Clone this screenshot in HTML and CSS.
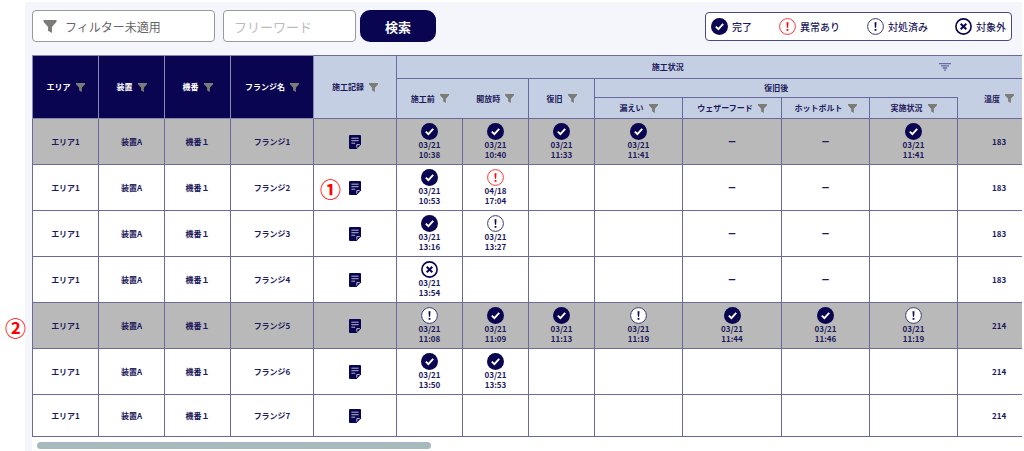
FILE: index.html
```html
<!DOCTYPE html>
<html lang="ja">
<head>
    <meta charset="UTF-8">
    <meta name="viewport" content="width=device-width, initial-scale=1.0">
    <title>施工状況一覧</title>
    <link rel="stylesheet" href="styles.css">
</head>
<body>
    <svg class="sprite" aria-hidden="true">
        <symbol id="funnel" viewBox="0 0 12 12">
            <path d="M0 0H12V1.6L7.8 6.4V12L4.2 10V6.4L0 1.6Z" fill="#7c7c76"/>
        </symbol>
        <symbol id="lines" viewBox="0 0 12 8">
            <path d="M0 .6H12M2 2.8H10M3.8 5H8.2M5 7.2H7" stroke="#6a6aa4" stroke-width="1.3"/>
        </symbol>
        <symbol id="done" viewBox="0 0 17 17">
            <circle cx="8.5" cy="8.5" r="8.5" fill="#0a0550"/>
            <path d="M4.8 8.6L7.4 11.1L12.2 5.9" fill="none" stroke="#fff" stroke-width="1.9"/>
        </symbol>
        <symbol id="error" viewBox="0 0 17 17">
            <circle cx="8.5" cy="8.5" r="7.9" fill="#fff" stroke="#f33" stroke-width="1"/>
            <path d="M7.5 4.2H9.5L9.1 9.8H7.9ZM7.6 10.9H9.4V12.7H7.6Z" fill="#f00"/>
        </symbol>
        <symbol id="handled" viewBox="0 0 17 17">
            <circle cx="8.5" cy="8.5" r="7.9" fill="#fff" stroke="#3b3873" stroke-width="1"/>
            <path d="M7.5 4.2H9.5L9.1 9.8H7.9ZM7.6 10.9H9.4V12.7H7.6Z" fill="#0a0550"/>
        </symbol>
        <symbol id="excluded" viewBox="0 0 17 17">
            <circle cx="8.5" cy="8.5" r="7.6" fill="#fff" stroke="#0a0550" stroke-width="1.6"/>
            <path d="M5.7 5.7L11.3 11.3M11.3 5.7L5.7 11.3" stroke="#0a0550" stroke-width="2"/>
        </symbol>
        <symbol id="note" viewBox="0 0 12 14">
            <path d="M1 0H11Q12 0 12 1V9.4L7.6 14H1Q0 14 0 13V1Q0 0 1 0Z" fill="#0a0550"/>
            <path d="M2.4 3.2H9.6M2.4 5.7H9.6M2.4 8.2H6.2" stroke="#b5b4d0" stroke-width="1"/>
            <path d="M7.8 12.6V9.6H10.8" fill="none" stroke="#d5d4e4" stroke-width=".9"/>
        </symbol>
    </svg>

    <main class="panel">
        <div class="toolbar">
            <button type="button" class="filter-box">
                <svg class="funnel-lg"><use href="#funnel"/></svg>
                フィルター未適用
            </button>
            <input type="text" class="free-word" placeholder="フリーワード" aria-label="フリーワード">
            <button type="button" class="search">検索</button>
            <ul class="legend">
                <li><svg class="status"><use href="#done"/></svg>完了</li>
                <li><svg class="status"><use href="#error"/></svg>異常あり</li>
                <li><svg class="status"><use href="#handled"/></svg>対処済み</li>
                <li><svg class="status"><use href="#excluded"/></svg>対象外</li>
            </ul>
        </div>

        <div class="table-area">
            <div class="table-wrap">
                <table>
                    <colgroup>
                        <col class="w-s"><col class="w-s"><col class="w-s"><col class="w-m"><col class="w-m">
                        <col class="w-s"><col class="w-s"><col class="w-s">
                        <col class="w-l"><col class="w-xl"><col class="w-l"><col class="w-l"><col class="w-m">
                    </colgroup>
                    <thead>
                        <tr class="head-top">
                            <th rowspan="3" class="key"><div class="head">エリア<button type="button" aria-label="エリアで絞り込み"><svg><use href="#funnel"/></svg></button></div></th>
                            <th rowspan="3" class="key"><div class="head">装置<button type="button" aria-label="装置で絞り込み"><svg><use href="#funnel"/></svg></button></div></th>
                            <th rowspan="3" class="key"><div class="head">機番<button type="button" aria-label="機番で絞り込み"><svg><use href="#funnel"/></svg></button></div></th>
                            <th rowspan="3" class="key"><div class="head">フランジ名<button type="button" aria-label="フランジ名で絞り込み"><svg><use href="#funnel"/></svg></button></div></th>
                            <th rowspan="3"><div class="head">施工記録<button type="button" aria-label="施工記録で絞り込み"><svg><use href="#funnel"/></svg></button></div></th>
                            <th colspan="7" class="open-right"><div class="group"><span>施工状況</span><button type="button" aria-label="施工状況の表示"><svg class="lines"><use href="#lines"/></svg></button></div></th>
                            <th class="open-left"></th>
                        </tr>
                        <tr class="head-mid">
                            <th rowspan="2" class="open-right"><div class="head">施工前<button type="button" aria-label="施工前で絞り込み"><svg><use href="#funnel"/></svg></button></div></th>
                            <th rowspan="2" class="open-left"><div class="head">開放時<button type="button" aria-label="開放時で絞り込み"><svg><use href="#funnel"/></svg></button></div></th>
                            <th rowspan="2"><div class="head">復旧<button type="button" aria-label="復旧で絞り込み"><svg><use href="#funnel"/></svg></button></div></th>
                            <th colspan="4" class="open-right">復旧後</th>
                            <th rowspan="2" class="open-left"><div class="head">温度<button type="button" aria-label="温度で絞り込み"><svg><use href="#funnel"/></svg></button></div></th>
                        </tr>
                        <tr class="head-low">
                            <th><div class="head">漏えい<button type="button" aria-label="漏えいで絞り込み"><svg><use href="#funnel"/></svg></button></div></th>
                            <th><div class="head">ウェザーフード<button type="button" aria-label="ウェザーフードで絞り込み"><svg><use href="#funnel"/></svg></button></div></th>
                            <th><div class="head">ホットボルト<button type="button" aria-label="ホットボルトで絞り込み"><svg><use href="#funnel"/></svg></button></div></th>
                            <th><div class="head">実施状況<button type="button" aria-label="実施状況で絞り込み"><svg><use href="#funnel"/></svg></button></div></th>
                        </tr>
                    </thead>
                    <tbody>
                        <tr class="finished">
                            <td>エリア1</td><td>装置A</td><td>機番１</td><td>フランジ1</td>
                            <td><svg class="note"><use href="#note"/></svg></td>
                            <td><svg class="status"><use href="#done"/></svg><time>03/21<br>10:38</time></td>
                            <td><svg class="status"><use href="#done"/></svg><time>03/21<br>10:40</time></td>
                            <td><svg class="status"><use href="#done"/></svg><time>03/21<br>11:33</time></td>
                            <td><svg class="status"><use href="#done"/></svg><time>03/21<br>11:41</time></td>
                            <td>ー</td><td>ー</td>
                            <td><svg class="status"><use href="#done"/></svg><time>03/21<br>11:41</time></td>
                            <td>183</td>
                        </tr>
                        <tr>
                            <td>エリア1</td><td>装置A</td><td>機番１</td><td>フランジ2</td>
                            <td class="marked"><span class="marker marker-cell">①</span><svg class="note"><use href="#note"/></svg></td>
                            <td><svg class="status"><use href="#done"/></svg><time>03/21<br>10:53</time></td>
                            <td><svg class="status"><use href="#error"/></svg><time>04/18<br>17:04</time></td>
                            <td></td><td></td><td>ー</td><td>ー</td><td></td>
                            <td>183</td>
                        </tr>
                        <tr>
                            <td>エリア1</td><td>装置A</td><td>機番１</td><td>フランジ3</td>
                            <td><svg class="note"><use href="#note"/></svg></td>
                            <td><svg class="status"><use href="#done"/></svg><time>03/21<br>13:16</time></td>
                            <td><svg class="status"><use href="#handled"/></svg><time>03/21<br>13:27</time></td>
                            <td></td><td></td><td>ー</td><td>ー</td><td></td>
                            <td>183</td>
                        </tr>
                        <tr>
                            <td>エリア1</td><td>装置A</td><td>機番１</td><td>フランジ4</td>
                            <td><svg class="note"><use href="#note"/></svg></td>
                            <td><svg class="status"><use href="#excluded"/></svg><time>03/21<br>13:54</time></td>
                            <td></td><td></td><td></td><td>ー</td><td>ー</td><td></td>
                            <td>183</td>
                        </tr>
                        <tr class="finished">
                            <td>エリア1</td><td>装置A</td><td>機番１</td><td>フランジ5</td>
                            <td><svg class="note"><use href="#note"/></svg></td>
                            <td><svg class="status"><use href="#handled"/></svg><time>03/21<br>11:08</time></td>
                            <td><svg class="status"><use href="#done"/></svg><time>03/21<br>11:09</time></td>
                            <td><svg class="status"><use href="#done"/></svg><time>03/21<br>11:13</time></td>
                            <td><svg class="status"><use href="#handled"/></svg><time>03/21<br>11:19</time></td>
                            <td><svg class="status"><use href="#done"/></svg><time>03/21<br>11:44</time></td>
                            <td><svg class="status"><use href="#done"/></svg><time>03/21<br>11:46</time></td>
                            <td><svg class="status"><use href="#handled"/></svg><time>03/21<br>11:19</time></td>
                            <td>214</td>
                        </tr>
                        <tr>
                            <td>エリア1</td><td>装置A</td><td>機番１</td><td>フランジ6</td>
                            <td><svg class="note"><use href="#note"/></svg></td>
                            <td><svg class="status"><use href="#done"/></svg><time>03/21<br>13:50</time></td>
                            <td><svg class="status"><use href="#done"/></svg><time>03/21<br>13:53</time></td>
                            <td></td><td></td><td></td><td></td><td></td>
                            <td>214</td>
                        </tr>
                        <tr class="last">
                            <td>エリア1</td><td>装置A</td><td>機番１</td><td>フランジ7</td>
                            <td><svg class="note"><use href="#note"/></svg></td>
                            <td></td><td></td><td></td><td></td><td></td><td></td><td></td>
                            <td>214</td>
                        </tr>
                    </tbody>
                </table>
            </div>
            <div class="scroll-track"><div class="scroll-thumb"></div></div>
            <span class="marker marker-row">②</span>
        </div>
    </main>
</body>
</html>
```
FILE: styles.css
```css
* {
    box-sizing: border-box;
}
body {
    margin: 0;
    background-color: #fff;
    color: #1d1a5c;
    font-family: "Noto Sans CJK JP", sans-serif;
    font-size: 8px;
    font-weight: 700;
}
button,
input {
    font-family: inherit;
}
.sprite {
    position: absolute;
    width: 0;
    height: 0;
}
.panel {
    margin: 2px 2px 0 25px;
    padding: 8px 0 0 7px;
    background-color: #f4f6fb;
}

/* toolbar */
.toolbar {
    display: flex;
    align-items: center;
    height: 32px;
    margin-bottom: 13px;
    padding-right: 10px;
}
.filter-box {
    display: flex;
    align-items: center;
    gap: 8px;
    width: 183px;
    height: 32px;
    margin-right: 8px;
    padding: 0 10px;
    border: 1px solid #999;
    border-radius: 4px;
    background-color: #fff;
    color: #666;
    font-size: 12px;
}
.funnel-lg {
    width: 14px;
    height: 13px;
}
.free-word {
    width: 133px;
    height: 32px;
    margin-right: 4px;
    padding: 0 10px;
    border: 1px solid #999;
    border-radius: 4px;
    background-color: #fff;
    color: #333;
    font-size: 13px;
}
.free-word::placeholder {
    color: #bbb;
}
.search {
    width: 76px;
    height: 32px;
    border: 0;
    border-radius: 10px;
    background-color: #0a0550;
    color: #fff;
    font-size: 13px;
    font-weight: 700;
}
.legend {
    display: flex;
    align-items: center;
    gap: 27px;
    height: 29px;
    margin: 0 0 0 auto;
    padding: 0 5px;
    border: 1px solid #4b4982;
    border-radius: 4px;
    background-color: #fff;
    font-size: 10px;
    font-weight: 500;
    list-style: none;
}
.legend li {
    display: flex;
    align-items: center;
    gap: 4px;
}
.status {
    display: block;
    width: 17px;
    height: 17px;
    margin: 0 auto;
}

/* table */
.table-area {
    position: relative;
    background-color: #fff;
}
.table-wrap {
    overflow: hidden;
}
table {
    width: 100%;
    min-width: 1007px;
    border-collapse: collapse;
    table-layout: fixed;
}
.w-s {
    width: 66px;
}
.w-m {
    width: 83px;
}
.w-l {
    width: 88px;
}
.w-xl {
    width: 99px;
}
th,
td {
    padding: 0;
    border: 1px solid #6b6a9f;
    text-align: center;
    vertical-align: middle;
    line-height: 10px;
}
th {
    background-color: #c5cfe3;
}
th.key {
    border-color: #8a89b3;
    background-color: #0a0550;
    color: #fff;
}
th.open-right {
    border-right: 0;
}
th.open-left {
    border-left: 0;
}
.head-top {
    height: 23px;
}
.head-mid {
    height: 19px;
}
.head-low {
    height: 21px;
}
.head {
    display: flex;
    align-items: center;
    justify-content: center;
    gap: 5px;
    white-space: nowrap;
}
.head button,
.group button {
    padding: 0;
    border: 0;
    background: none;
}
.head svg {
    display: block;
    width: 9px;
    height: 9px;
}
.group {
    display: flex;
    align-items: center;
    padding-right: 7px;
}
.group span {
    flex: 1;
}
.group .lines {
    display: block;
    width: 12px;
    height: 8px;
}
tbody tr {
    height: 46px;
}
tbody tr.last {
    height: 42px;
}
.finished {
    background-color: #b9b9b9;
}
time {
    display: block;
    line-height: 10px;
}
.note {
    display: block;
    width: 12px;
    height: 14px;
    margin: 0 auto;
}
.scroll-track {
    height: 16px;
    padding: 5px 0 5px 5px;
}
.scroll-thumb {
    width: 40%;
    height: 7px;
    border-radius: 4px;
    background-color: #a6b9bd;
}

/* numbered callouts */
.marked {
    position: relative;
}
.marker {
    position: absolute;
    color: #f00;
    font-size: 21px;
    line-height: 22px;
}
.marker-cell {
    top: 12px;
    left: 6px;
}
.marker-row {
    top: 261px;
    left: -27px;
}
```
